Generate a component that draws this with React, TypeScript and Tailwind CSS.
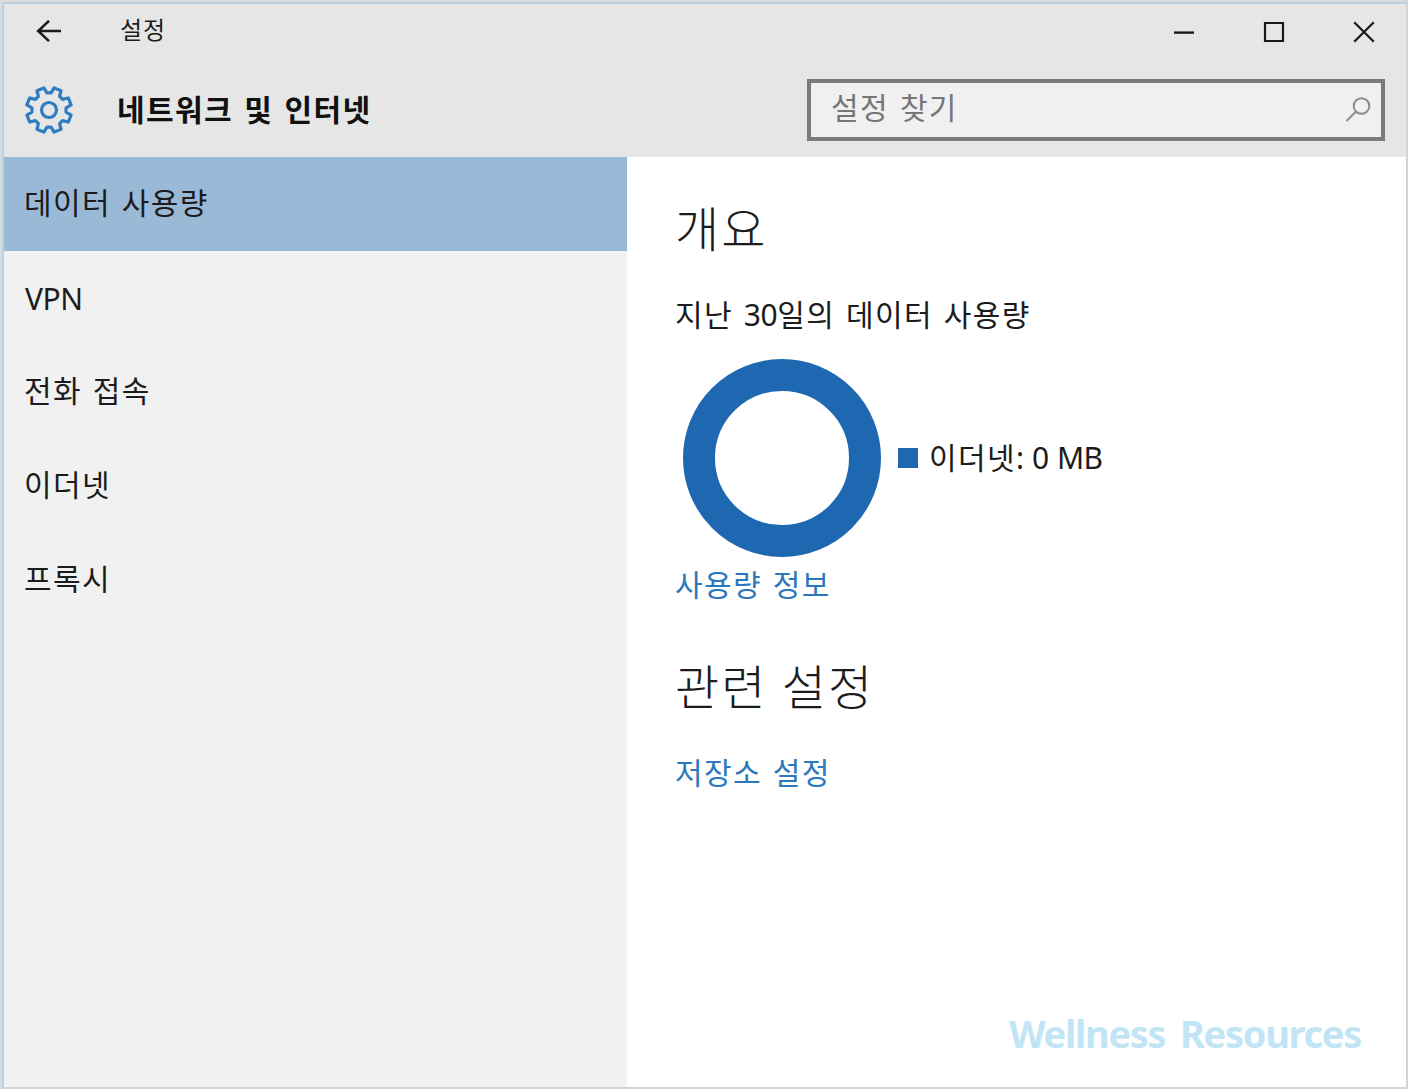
import clsx from 'clsx'

const MENU_ITEMS = ['데이터 사용량', 'VPN', '전화 접속', '이더넷', '프록시']

// Eight-toothed cog outline around (26, 26)
function gearPath() {
  const points: string[] = []
  const at = (deg: number, r: number) => {
    const a = (deg * Math.PI) / 180
    return `${(26 + r * Math.sin(a)).toFixed(2)} ${(26 - r * Math.cos(a)).toFixed(2)}`
  }
  for (let i = 0; i < 8; i++) {
    const base = i * 45
    points.push(at(base - 7, 17.2), at(base + 7, 17.2), at(base + 13, 22.7), at(base + 32, 22.7))
  }
  return `M${points.join('L')}Z`
}

function GearIcon() {
  return (
    <svg className="size-[52px]" viewBox="0 0 52 52" fill="none" stroke="#2f7cc0" strokeWidth="3.2" strokeLinejoin="round">
      <path d={gearPath()} />
      <circle cx="26" cy="26" r="7.5" />
    </svg>
  )
}

function BackIcon() {
  return (
    <svg className="h-6 w-7" viewBox="0 0 28 24" fill="none" stroke="#1a1a1a" strokeWidth="2.5">
      <path d="M26 11H3M14 0.8L3.2 11L14 21.2" />
    </svg>
  )
}

function SearchIcon() {
  return (
    <svg className="size-7" viewBox="0 0 28 28" fill="none" stroke="#8c8c8c" strokeWidth="2">
      <circle cx="17.5" cy="10" r="7.8" />
      <path d="M12 15.5L2.5 25" />
    </svg>
  )
}

function TitleBar() {
  return (
    <div className="flex h-[55px] items-center pl-[31px]">
      <button className="flex">
        <BackIcon />
      </button>
      <span className="ml-[57px] flex-1 pb-1 text-2xl leading-none tracking-[0.8px]">설정</span>
      <div className="flex items-center gap-[68px] pr-[31px]">
        <svg className="size-[22px]" viewBox="0 0 22 22" stroke="#1a1a1a" strokeWidth="2.4">
          <path d="M1 11.6H21" />
        </svg>
        <svg className="size-[22px]" viewBox="0 0 22 22" fill="none" stroke="#1a1a1a" strokeWidth="2.2">
          <path d="M2 2H20V20H2Z" />
        </svg>
        <svg className="size-[22px]" viewBox="0 0 22 22" stroke="#1a1a1a" strokeWidth="2.2">
          <path d="M1.2 1.2L20.8 20.8M20.8 1.2L1.2 20.8" />
        </svg>
      </div>
    </div>
  )
}

function Header() {
  return (
    <div className="flex h-[98px] items-center pt-[3px] pr-[21px] pl-[19px]">
      <GearIcon />
      <h1 className="ml-[42px] flex-1 text-[30px] leading-none font-bold tracking-[1.4px] text-[#111] [word-spacing:2px]">
        네트워크 및 인터넷
      </h1>
      <div className="flex h-[62px] w-[578px] items-center justify-between border-4 border-[#7b7b7b] bg-[#f0f0f0] pr-[9px] pl-5">
        <span className="pb-[3px] text-[30px] leading-none tracking-[1.3px] text-[#767676] [word-spacing:2px]">설정 찾기</span>
        <SearchIcon />
      </div>
    </div>
  )
}

function Sidebar() {
  return (
    <nav className="w-[623px] shrink-0 bg-[#f1f1f1]">
      {MENU_ITEMS.map((item, i) => (
        <div
          key={item}
          className={clsx(
            'flex h-[94px] items-center text-[30px] leading-none [word-spacing:1.5px]',
            i === 0 && 'bg-[#99b9d7]',
            item === 'VPN' ? 'pt-0.5 pl-[21px] tracking-[-0.4px]' : 'pb-0.5 pl-5 tracking-[1.4px]',
          )}
        >
          {item}
        </div>
      ))}
    </nav>
  )
}

function Content() {
  return (
    <main className="flex flex-1 flex-col items-start bg-white pt-12 pl-12 text-[30px] leading-none tracking-[1.4px] [word-spacing:1.5px]">
      <h2 className="text-5xl leading-[48px] font-light tracking-[2px] [word-spacing:0px]">개요</h2>
      <p className="mt-[47px]">
        지난 <span className="tracking-[-0.4px]">30</span>일의 데이터 사용량
      </p>

      <div className="mt-[28px] ml-[7px] flex items-center">
        <svg className="size-[200px]" viewBox="0 0 200 200">
          <circle cx="100" cy="100" r="83" fill="none" stroke="#1d68b1" strokeWidth="32" />
        </svg>
        <span className="ml-4 size-5 bg-[#1d68b1]" />
        <span className="ml-[11px]">
          이더넷<span className="tracking-[-0.7px]">: 0 MB</span>
        </span>
      </div>

      <a className="mt-[12px] text-[#2b78bd]">사용량 정보</a>

      <h2 className="mt-[62px] text-5xl leading-[50px] font-light tracking-[2px] [word-spacing:0px]">관련 설정</h2>
      <a className="mt-[46px] text-[#2b78bd]">저장소 설정</a>

      <p className="mt-auto mr-[45px] mb-[35px] self-end text-[38px] leading-none font-bold tracking-[-1.3px] text-[#c2e5f5] [word-spacing:6px]">
        Wellness Resources
      </p>
    </main>
  )
}

export default function App() {
  return (
    <div className="h-[1089px] w-[1408px] border-2 border-[#d3d3d3] border-t-[#dcdcdc] border-l-[#dcdcdc] font-['Noto_Sans','Noto_Sans_CJK_KR',sans-serif] text-[#1c1c1c]">
      <div className="flex h-full flex-col border-t-2 border-l-2 border-[#b9cfe2] bg-[#e6e6e6]">
        <TitleBar />
        <Header />
        <div className="flex flex-1">
          <Sidebar />
          <Content />
        </div>
      </div>
    </div>
  )
}
